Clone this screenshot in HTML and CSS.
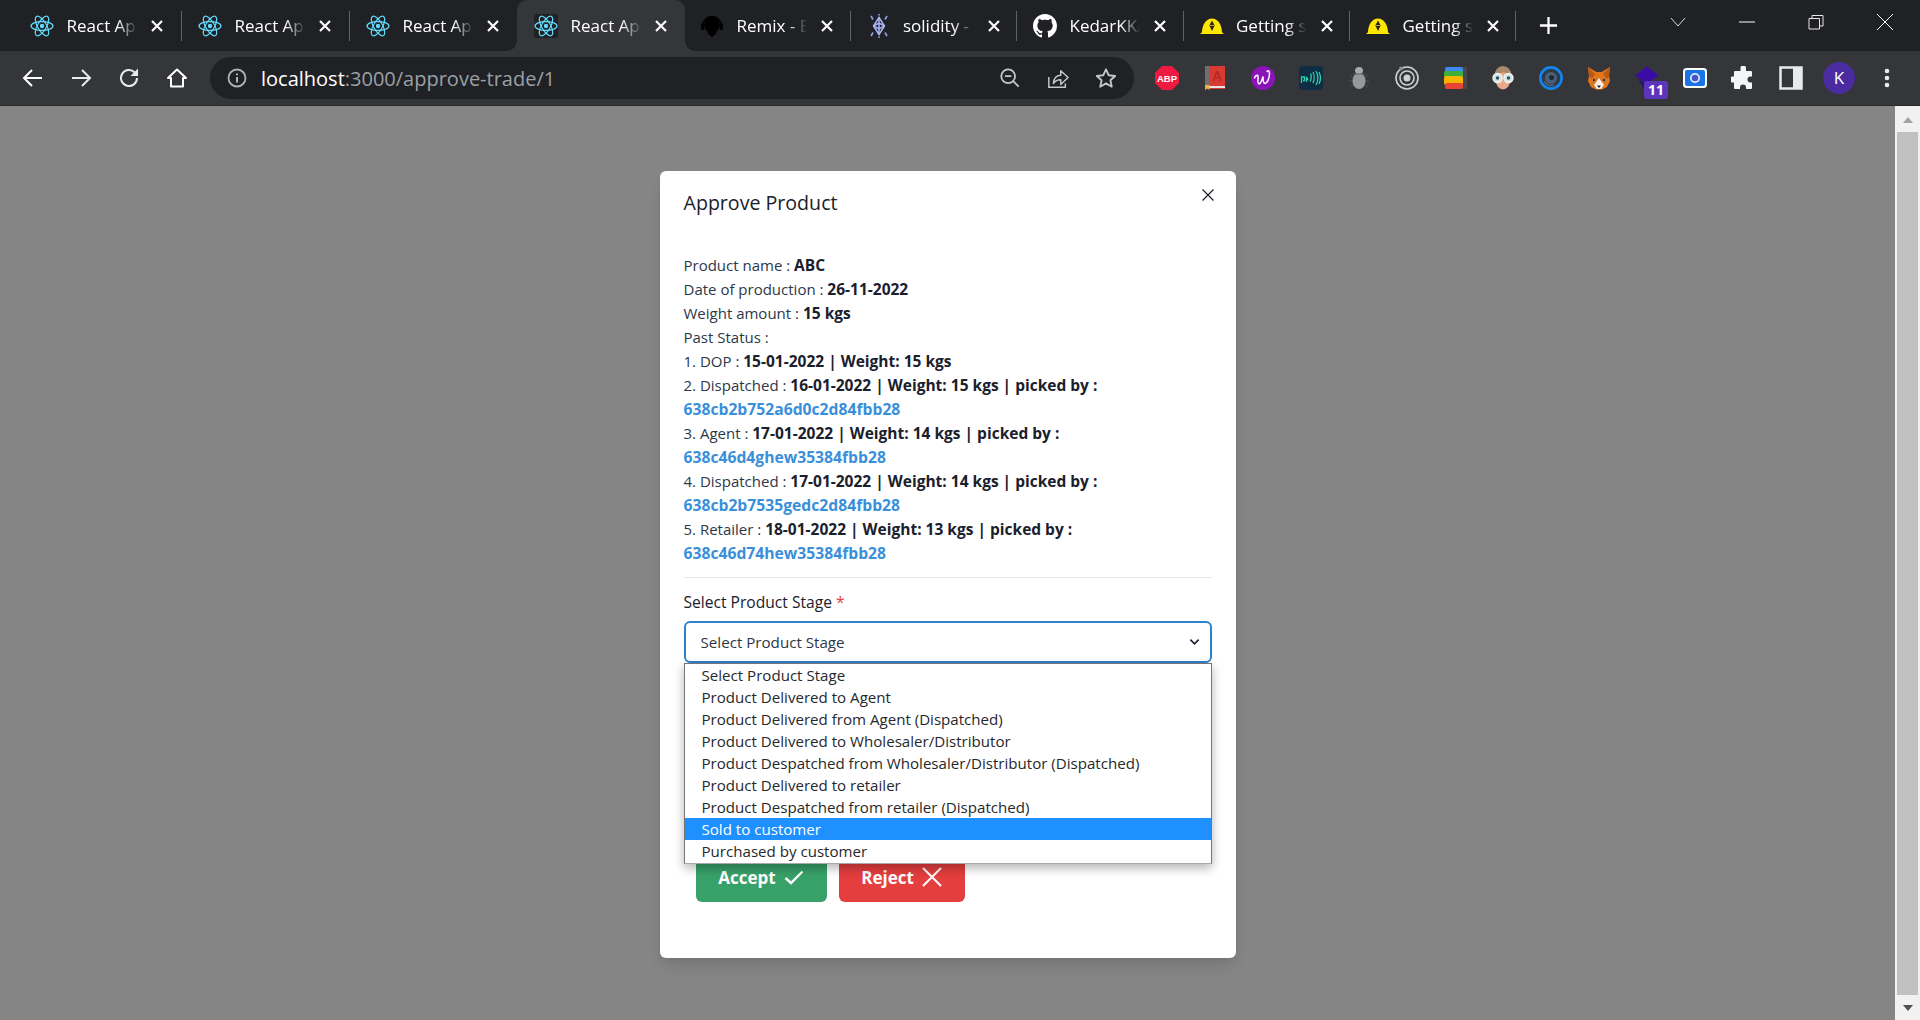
FILE: index.html
```html
<!DOCTYPE html>
<html lang="en">
<head>
<meta charset="utf-8">
<title>React App</title>
<link rel="stylesheet" href="styles.css">
</head>
<body>
<svg class="defs" width="0" height="0">
  <defs>
    <symbol id="react" viewBox="0 0 24 24">
      <g fill="none" stroke="#61dafb" stroke-width="1.200">
        <ellipse cx="12" cy="12" rx="11" ry="4.400"/>
        <ellipse cx="12" cy="12" rx="11" ry="4.400" transform="rotate(60 12 12)"/>
        <ellipse cx="12" cy="12" rx="11" ry="4.400" transform="rotate(120 12 12)"/>
      </g>
      <circle cx="12" cy="12" r="2.200" fill="#61dafb"/>
    </symbol>
    <symbol id="helmet" viewBox="0 0 24 24">
      <path d="M.5 20c0-1 .6-1.400 1.400-1.500C2.300 10 6.500 4.500 12 4.500s9.700 5.500 10.100 14c.8.100 1.400.5 1.400 1.500z" fill="#ffe600"/>
      <path d="M12 6.500l2.600 5L12 17l-2.600-5.500z" fill="#222"/>
      <path d="M9.800 11.500h4.400" stroke="#ffe600" stroke-width=".7"/>
    </symbol>
    <symbol id="close" viewBox="0 0 16 16">
      <path d="M3 3l10 10M13 3L3 13" stroke="#fff" stroke-width="2.200" fill="none"/>
    </symbol>
  </defs>
</svg>

<div class="browser">
  <div class="tabstrip">
    <div class="tab"><svg class="fav"><use href="#react"/></svg><span class="tabtitle">React App</span><svg class="tabclose"><use href="#close"/></svg></div>
    <div class="tab sep"><svg class="fav"><use href="#react"/></svg><span class="tabtitle">React App</span><svg class="tabclose"><use href="#close"/></svg></div>
    <div class="tab sep"><svg class="fav"><use href="#react"/></svg><span class="tabtitle">React App</span><svg class="tabclose"><use href="#close"/></svg></div>
    <div class="tab active"><svg class="fav favbox"><use href="#react"/></svg><span class="tabtitle">React App</span><svg class="tabclose"><use href="#close"/></svg></div>
    <div class="tab narrow"><svg class="fav" viewBox="0 0 24 24"><path d="M2.500 12a9.500 9.500 0 0 1 19 0" fill="none" stroke="#000" stroke-width="1.300"/><circle cx="12" cy="11" r="8" fill="#000"/><rect x="1" y="9" width="3" height="7" rx="1.500" fill="#000"/><rect x="20" y="9" width="3" height="7" rx="1.500" fill="#000"/><path d="M7 18.500h10l-5 5z" fill="#000"/></svg><span class="tabtitle">Remix - Ethereum</span><svg class="tabclose"><use href="#close"/></svg></div>
    <div class="tab narrow sep"><svg class="fav" viewBox="0 0 24 24"><g fill="none" stroke="#aab4f5" stroke-width="1.500"><path d="M12 3.500l5.500 8.500-5.500 8.500L6.500 12z"/><path d="M6.500 12l5.500-3 5.500 3M6.500 12l5.500 3 5.500-3M12 3.500v17"/></g><path d="M4 2l2 3.500M20 2l-2 3.500M4 22l2-3.500M20 22l-2-3.500M12 0v1.500M12 22.500V24" stroke="#8e9be6" stroke-width="1.700"/></svg><span class="tabtitle">solidity - Google</span><svg class="tabclose"><use href="#close"/></svg></div>
    <div class="tab narrow sep"><svg class="fav" viewBox="0 0 16 16"><path fill="#fff" d="M8 0C3.580 0 0 3.580 0 8c0 3.540 2.290 6.530 5.470 7.590.4.070.55-.17.55-.38 0-.19-.01-.82-.01-1.490-2.010.37-2.530-.49-2.690-.94-.09-.23-.48-.94-.82-1.130-.28-.15-.68-.52-.01-.53.63-.01 1.080.58 1.230.82.720 1.210 1.870.87 2.330.66.070-.52.280-.87.510-1.070-1.780-.2-3.640-.89-3.640-3.950 0-.87.310-1.590.820-2.150-.08-.2-.36-1.020.08-2.120 0 0 .67-.21 2.200.82.640-.18 1.320-.27 2-.27s1.360.09 2 .27c1.530-1.040 2.200-.82 2.200-.82.440 1.100.16 1.920.08 2.120.51.560.82 1.270.82 2.150 0 3.070-1.870 3.750-3.650 3.950.29.250.54.730.54 1.480 0 1.070-.01 1.930-.01 2.200 0 .21.150.46.550.38A8.010 8.010 0 0 0 16 8c0-4.420-3.580-8-8-8z"/></svg><span class="tabtitle">KedarKK/Repo</span><svg class="tabclose"><use href="#close"/></svg></div>
    <div class="tab narrow sep"><svg class="fav"><use href="#helmet"/></svg><span class="tabtitle">Getting started</span><svg class="tabclose"><use href="#close"/></svg></div>
    <div class="tab narrow sep endsep"><svg class="fav"><use href="#helmet"/></svg><span class="tabtitle">Getting started</span><svg class="tabclose"><use href="#close"/></svg></div>
    <svg class="newtab" viewBox="0 0 20 20"><path d="M10 1v18M1 10h18" stroke="#fff" stroke-width="2.400"/></svg>
    <div class="winctl">
      <svg class="winbtn" viewBox="0 0 16 16"><path d="M1 4l7 8 7-8" fill="none" stroke="#d8d9da" stroke-width="1"/></svg>
      <svg class="winbtn" viewBox="0 0 16 16"><path d="M0 8h16" stroke="#fff" stroke-width="1"/></svg>
      <svg class="winbtn" viewBox="0 0 16 16"><path d="M1 4.500h10.500V15H1zM4 4.500V1.500h11V12h-3.500" fill="none" stroke="#e8e8e8" stroke-width="1"/></svg>
      <svg class="winbtn" viewBox="0 0 16 16"><path d="M0 0l16 16M16 0L0 16" stroke="#fff" stroke-width="1"/></svg>
    </div>
  </div>

  <div class="toolbar">
    <svg class="tool" viewBox="0 0 24 24"><path d="M21 12H4M11 4l-8 8 8 8" fill="none" stroke="#fff" stroke-width="2"/></svg>
    <svg class="tool" viewBox="0 0 24 24"><path d="M3 12h17M13 4l8 8-8 8" fill="none" stroke="#e8eaed" stroke-width="2"/></svg>
    <svg class="tool" viewBox="0 0 24 24"><path d="M20 12a8 8 0 1 1-2.400-5.700" fill="none" stroke="#e8eaed" stroke-width="2"/><path d="M21 2.500v7.500h-7.500z" fill="#e8eaed"/></svg>
    <svg class="tool" viewBox="0 0 24 24"><path d="M12 3.500L3 12h3v8.500h12V12h3z" fill="none" stroke="#fff" stroke-width="2" stroke-linejoin="round"/></svg>
    <div class="omnibox">
      <svg class="omni-info" viewBox="0 0 20 20"><circle cx="10" cy="10" r="8.500" fill="none" stroke="#b0b2b5" stroke-width="1.800"/><path d="M10 9v5.500M10 5.500v1.800" stroke="#b0b2b5" stroke-width="2"/></svg>
      <span class="url"><span class="host">localhost</span>:3000/approve-trade/1</span>
      <svg class="omni-icon zoomout" viewBox="0 0 24 24"><circle cx="10" cy="10" r="7.500" fill="none" stroke="#c4c6c9" stroke-width="2"/><path d="M6.500 10h7M15.500 15.500l6 6" stroke="#c4c6c9" stroke-width="2"/></svg>
      <svg class="omni-icon" viewBox="0 0 24 24"><path d="M2 11v11h18v-4" fill="none" stroke="#c4c6c9" stroke-width="1.600"/><path d="M7 18c0-6 4-9 8-9V4l8 7.500-8 7.500v-5c-3 0-6 1-8 4z" fill="none" stroke="#c4c6c9" stroke-width="1.600" stroke-linejoin="round"/></svg>
      <svg class="omni-icon" viewBox="0 0 24 24"><path d="M12 2.500l3 6.500 7 .8-5.200 4.700 1.500 7L12 17.900l-6.300 3.600 1.500-7L2 9.800 9 9z" fill="none" stroke="#c4c6c9" stroke-width="2" stroke-linejoin="round"/></svg>
    </div>
    <div class="extensions">
      <svg class="ext" viewBox="0 0 24 24"><path d="M7 0h10l7 7v10l-7 7H7l-7-7V7z" fill="#f0193f"/><text x="12" y="16" class="abp">ABP</text></svg>
      <svg class="ext" viewBox="0 0 24 24"><rect x="2" y="0" width="20" height="23" fill="#d93a32"/><rect x="2" y="0" width="4" height="23" fill="#6f6f72"/><rect x="6" y="20" width="16" height="2" fill="#e6e6e6"/><text x="14" y="15" class="booktext">A</text><path d="M2 19h4.500v5l-2.200-1.500L2 24z" fill="#e8b63a"/></svg>
      <svg class="ext" viewBox="0 0 24 24"><circle cx="12" cy="12" r="12" fill="#8a14b8"/><path d="M3.500 12c1-2.500 3-3.500 3.500-2 .5 2-1 6 .5 7.500s3.500-3 4.500-7c0 3 0 7 2 7s4.500-5 4.500-10c0-3-1.500-3.500-2.500-2" fill="none" stroke="#fff" stroke-width="1.500" stroke-linecap="round"/></svg>
      <svg class="ext" viewBox="0 0 24 24"><rect x="0" y="0" width="24" height="24" rx="3" fill="#0f2d44"/><path d="M2.500 17v-6h3v3.500H4M7.500 16v-5l1.500 3M11 15.500c1.500-2 1.500-6 .5-8M14 17c1.500-3 1.500-8 0-11M17 19c2.500-4 2.500-10 0-14M20 18c2-4 2-8 0-12" fill="none" stroke="#2fd4a8" stroke-width="1.300"/></svg>
      <svg class="ext" viewBox="0 0 24 24"><path d="M3 9l4 3M21 9l-4 3M2 15h5M22 15h-5M3 21l4-3M21 21l-4-3" stroke="#4e5053" stroke-width="1"/><ellipse cx="12" cy="15" rx="6.500" ry="8" fill="#96989a"/><ellipse cx="12" cy="4.500" rx="4" ry="3.500" fill="#a8aaac"/><path d="M6 8h12" stroke="#5c5e60" stroke-width="1"/></svg>
      <svg class="ext" viewBox="0 0 24 24"><g fill="none" stroke="#cfd0d2"><circle cx="12" cy="12" r="11" stroke-width="1.600"/><circle cx="12" cy="12" r="7" stroke-width="1.600"/></g><circle cx="12" cy="12" r="3.500" fill="#cfd0d2"/><circle cx="6" cy="2.500" r="2" fill="#8d8f91"/></svg>
      <svg class="ext" viewBox="0 0 24 24"><rect x="18" y="1" width="6" height="22" fill="#47484c"/><rect x="2" y="1" width="18" height="8" rx="2" fill="#3b8cf0"/><rect x="1" y="5" width="19" height="7" rx="2" fill="#3eb03a"/><rect x="1" y="10" width="19" height="9" rx="2" fill="#f4b400"/><rect x="2" y="17" width="18" height="6" rx="2" fill="#ea4335"/></svg>
      <svg class="ext" viewBox="0 0 24 24"><ellipse cx="12" cy="9.500" rx="8.500" ry="9.500" fill="#a98a6a"/><ellipse cx="12" cy="15" rx="7" ry="8.500" fill="#e9a98c"/><circle cx="6.500" cy="12" r="4.500" fill="#cfe6e8" stroke="#f4f4f4" stroke-width="1.400"/><circle cx="17.500" cy="12" r="4.500" fill="#cfe6e8" stroke="#f4f4f4" stroke-width="1.400"/><circle cx="6.500" cy="12" r="1.700" fill="#3a4c55"/><circle cx="17.500" cy="12" r="1.700" fill="#3a4c55"/></svg>
      <svg class="ext" viewBox="0 0 24 24"><circle cx="12" cy="12" r="10.600" fill="#2c3a49" stroke="#1286f0" stroke-width="2.600"/><circle cx="12" cy="12" r="6" fill="#4a6075"/><circle cx="12.500" cy="11.500" r="2.500" fill="#1c2a38"/><path d="M5 15a8 8 0 0 0 10 4" fill="none" stroke="#51677c" stroke-width="1.500"/></svg>
      <svg class="ext" viewBox="0 0 24 24"><path d="M1 1l8.500 5h5L23 1l-1 9 1 5-3 6-5 2.500H9L4 21l-3-6 1-5z" fill="#e2761b"/><path d="M1 1l7 7-3.500 5L2 10zM23 1l-7 7 3.500 5L22 10z" fill="#b85a14"/><path d="M12 12l-5 7 3 4h4l3-4z" fill="#f8f0e6"/><path d="M10 19.500h4l-2 2.500z" fill="#1f1f1f"/><path d="M6 12.500l3 1.500-3 1.500zM18 12.500l-3 1.500 3 1.500z" fill="#233447"/></svg>
      <div class="badged">
        <svg class="ext" viewBox="0 0 24 24"><path d="M12 .5l12 9-12 8-12-8z" fill="#3a0ca3"/><path d="M3 12.500l9 6.500 3-2v7H9.500z" fill="#2a0d80"/></svg>
        <span class="badge">11</span>
      </div>
      <svg class="ext" viewBox="0 0 24 24"><rect x="0" y="2" width="24" height="20" rx="3.500" fill="#fff"/><rect x="2" y="4" width="20" height="16" rx="2" fill="#1a73e8"/><circle cx="12" cy="12" r="5" fill="#e3ecfb"/><circle cx="12" cy="12" r="3.300" fill="#4356cc"/></svg>
      <svg class="ext" viewBox="0 0 24 24"><path d="M9.500 1.500a2.800 2.800 0 0 1 5.500 .3V5h5a1 1 0 0 1 1 1v4.500h-1.500a3 3 0 0 0 0 6H21V22a1 1 0 0 1-1 1h-5v-1.500a3 3 0 0 0-6 0V23H4a1 1 0 0 1-1-1v-5.500H1.500a3 3 0 0 1 0-6H3V6a1 1 0 0 1 1-1h5.500z" fill="#f4f5f6"/></svg>
      <svg class="ext" viewBox="0 0 24 24"><rect x="1.500" y="1.500" width="21" height="21" fill="none" stroke="#e8eaed" stroke-width="2.500"/><rect x="14" y="1.500" width="9" height="21" fill="#e8eaed"/></svg>
      <span class="avatar">K</span>
      <svg class="ext" viewBox="0 0 24 24"><circle cx="12" cy="5" r="2.300" fill="#e8eaed"/><circle cx="12" cy="12" r="2.300" fill="#e8eaed"/><circle cx="12" cy="19" r="2.300" fill="#e8eaed"/></svg>
    </div>
  </div>

  <div class="viewport">
    <main class="page">
      <section class="modal">
        <header class="modal-header">
          <h2 class="modal-title">Approve Product</h2>
          <svg class="modal-close" viewBox="0 0 12 12"><path d="M.5 .5l11 11M11.500 .5l-11 11" stroke="#1a202c" stroke-width="1.200"/></svg>
        </header>
        <div class="modal-body">
          <p>Product name : <b>ABC</b></p>
          <p>Date of production : <b>26-11-2022</b></p>
          <p>Weight amount : <b>15 kgs</b></p>
          <p>Past Status :</p>
          <p>1. DOP : <b>15-01-2022 | Weight: 15 kgs</b></p>
          <p>2. Dispatched : <b>16-01-2022 | Weight: 15 kgs | picked by :</b></p>
          <p class="addr">638cb2b752a6d0c2d84fbb28</p>
          <p>3. Agent : <b>17-01-2022 | Weight: 14 kgs | picked by :</b></p>
          <p class="addr">638c46d4ghew35384fbb28</p>
          <p>4. Dispatched : <b>17-01-2022 | Weight: 14 kgs | picked by :</b></p>
          <p class="addr">638cb2b7535gedc2d84fbb28</p>
          <p>5. Retailer : <b>18-01-2022 | Weight: 13 kgs | picked by :</b></p>
          <p class="addr">638c46d74hew35384fbb28</p>
          <hr class="divider">
          <div class="field-label">Select Product Stage <span class="req">*</span></div>
          <div class="select-wrap">
            <div class="select">
              <span>Select Product Stage</span>
              <svg class="chevron" viewBox="0 0 12 8"><path d="M1.500 1.500L6 6l4.500-4.500" fill="none" stroke="#1a202c" stroke-width="1.800"/></svg>
            </div>
            <ul class="options">
              <li>Select Product Stage</li>
              <li>Product Delivered to Agent</li>
              <li>Product Delivered from Agent (Dispatched)</li>
              <li>Product Delivered to Wholesaler/Distributor</li>
              <li>Product Despatched from Wholesaler/Distributor (Dispatched)</li>
              <li>Product Delivered to retailer</li>
              <li>Product Despatched from retailer (Dispatched)</li>
              <li class="selected">Sold to customer</li>
              <li>Purchased by customer</li>
            </ul>
          </div>
          <div class="actions">
            <button class="btn accept">Accept <svg class="btn-icon" viewBox="0 0 20 20"><path d="M1.500 11l5.500 5L18.500 4.500" fill="none" stroke="#fff" stroke-width="2.400"/></svg></button>
            <button class="btn reject">Reject <svg class="btn-icon" viewBox="0 0 20 20"><path d="M1 1l18 18M19 1L1 19" stroke="#fff" stroke-width="2"/></svg></button>
          </div>
        </div>
      </section>
    </main>
    <div class="scrollbar">
      <div class="scroll-arrow up"></div>
      <div class="scroll-thumb"></div>
      <div class="scroll-arrow down"></div>
    </div>
  </div>
</div>
</body>
</html>
```

FILE: styles.css
```css
* { box-sizing: border-box; }
html, body { margin: 0; padding: 0; height: 100%; overflow: hidden; }
body { font-family: "Open Sans", "Noto Sans", sans-serif; background: #858585; }
.defs { position: absolute; }
.browser { display: flex; flex-direction: column; height: 1020px; }

.tabstrip { display: flex; align-items: stretch; height: 51px; padding-left: 13px; background: #202124; color: #fff; }
.tab { position: relative; display: flex; align-items: center; width: 168px; flex: none; padding-left: 17px; }
.tab.narrow { width: 166.5px; }
.tab.sep::before { content: ""; position: absolute; left: 0; top: 11px; height: 30px; width: 1px; background: #5f6368; }
.tab.endsep::after { content: ""; position: absolute; right: 0; top: 11px; height: 30px; width: 1px; background: #5f6368; }
.tab.active { margin-right: -2px; background: #35363a; border-radius: 10px 10px 0 0; }
.tab.active::before, .tab.active::after { content: ""; position: absolute; bottom: 0; width: 10px; height: 10px; }
.tab.active::before { left: -10px; background: radial-gradient(circle at 0 0, #202124 9.500px, #35363a 10px); }
.tab.active::after { right: -10px; background: radial-gradient(circle at 100% 0, #202124 9.500px, #35363a 10px); }
.fav { width: 24px; height: 24px; flex: none; }
.favbox { background: #202124; border-radius: 3px; }
.tabtitle { width: 72px; margin-left: 12.500px; overflow: hidden; white-space: nowrap; font-size: 17px; -webkit-mask-image: linear-gradient(90deg, #000 70%, transparent 98%); mask-image: linear-gradient(90deg, #000 70%, transparent 98%); }
.tabclose { width: 16px; height: 16px; margin-left: 10.500px; flex: none; }
.newtab { width: 19px; height: 19px; align-self: center; margin-left: 23px; flex: none; }
.winctl { display: flex; align-items: flex-start; gap: 53px; margin-left: auto; padding: 14px 27px 0 0; }
.winbtn { width: 16px; height: 16px; }

.toolbar { display: flex; align-items: center; height: 55px; padding: 0 0 0 21px; background: #35363a; border-bottom: 1px solid #2a2b2e; }
.tool { width: 24px; height: 24px; margin-right: 24px; flex: none; }
.omnibox { display: flex; align-items: center; width: 924px; height: 42px; margin-left: -3px; padding: 0 17px 0 17px; border-radius: 21px; background: #202124; flex: none; }
.omni-info { width: 20px; height: 20px; flex: none; }
.url { flex: 1; margin-left: 14px; font-size: 20px; color: #9aa0a6; white-space: nowrap; }
.host { color: #fff; }
.omni-icon { width: 22px; height: 22px; margin-left: 26px; flex: none; }
.extensions { display: flex; align-items: center; gap: 24px; margin-left: 21px; }
.ext { width: 24px; height: 24px; flex: none; display: block; }
.abp { font: 700 9.500px "Liberation Sans", sans-serif; fill: #fff; text-anchor: middle; }
.booktext { font: 700 14px "Liberation Sans", sans-serif; fill: #b52a24; text-anchor: middle; }
.badged { position: relative; width: 24px; height: 24px; flex: none; }
.badge { position: absolute; left: 9px; top: 15px; width: 24px; height: 18px; border-radius: 3px; background: #5c35bd; color: #fff; font: 700 14px/18px "Open Sans", sans-serif; text-align: center; }
.avatar { width: 32px; height: 32px; margin: 0 -4px; border-radius: 50%; background: #4a2ba0; color: #fff; font-size: 17px; line-height: 32px; text-align: center; flex: none; }

.viewport { flex: 1; display: flex; min-height: 0; }
.page { flex: 1; display: flex; justify-content: center; align-items: flex-start; padding-top: 65px; background: #858585; }
.modal { width: 576px; height: 787px; background: #fff; border-radius: 6px; box-shadow: 0 10px 15px -3px rgba(0,0,0,.1), 0 4px 6px -2px rgba(0,0,0,.05); color: #1a202c; }
.modal-header { display: flex; justify-content: space-between; padding: 17px 22px 0 24px; }
.modal-title { margin: 0; font-size: 19.600px; line-height: 30px; font-weight: 500; }
.modal-close { width: 12px; height: 12px; margin-top: 1px; }
.modal-body { padding: 35px 24px 0; font-size: 15px; line-height: 24px; color: #2d3748; }
.modal-body p { margin: 0; white-space: nowrap; }
.modal-body b { color: #1a202c; font-size: 15.500px; font-weight: 700; }
.modal-body .addr { color: #3a8fdb; font-size: 15.700px; font-weight: 700; }
.divider { margin: 12px 0 0; border: 0; border-top: 1px solid #e2e8f0; }
.field-label { margin-top: 12px; font-size: 15.600px; font-weight: 500; line-height: 24px; color: #1a202c; }
.req { color: #e53e3e; }
.select-wrap { position: relative; margin-top: 7px; }
.select { display: flex; align-items: center; justify-content: space-between; height: 42px; padding: 0 10px 0 15px; border: 2px solid #3182ce; border-radius: 6px; font-size: 15.150px; color: #2d3748; }
.chevron { width: 11px; height: 8px; }
.options { position: absolute; left: 0; right: 0; top: 42px; z-index: 2; margin: 0; padding: 0 0 1px; list-style: none; background: #fff; border: 1px solid #767676; border-bottom-color: #a8a8a8; box-shadow: 0 4px 10px rgba(0,0,0,.3); }
.options li { height: 22px; padding-left: 17px; font-size: 15.100px; line-height: 22px; color: #26282c; white-space: nowrap; }
.options li.selected { background: #1e90ff; color: #fff; }
.actions { display: flex; gap: 12px; margin-top: 191px; padding-left: 12px; }
.btn { display: inline-flex; align-items: center; justify-content: center; gap: 8px; height: 48px; padding: 0 0 2px; border: 0; border-radius: 6px; color: #fff; font: 700 17px "Open Sans", sans-serif; }
.accept { width: 131px; background: #38a169; }
.reject { width: 126px; background: #e53e3e; }
.btn-icon { width: 20px; height: 20px; }

.scrollbar { width: 25px; flex: none; display: flex; flex-direction: column; background: #f1f1f1; }
.scroll-arrow { position: relative; flex: none; display: flex; justify-content: center; align-items: center; }
.scroll-arrow::before { content: ""; border: 5.500px solid transparent; }
.scroll-arrow.up { height: 26px; padding-top: 2px; }
.scroll-arrow.up::before { border-top: 0; border-bottom: 6px solid #a3a3a3; }
.scroll-arrow.down { height: 25px; }
.scroll-arrow.down::before { border-bottom: 0; border-top: 6px solid #505050; }
.scroll-thumb { flex: 1; margin: 0 2px; background: #c1c1c1; }
```
